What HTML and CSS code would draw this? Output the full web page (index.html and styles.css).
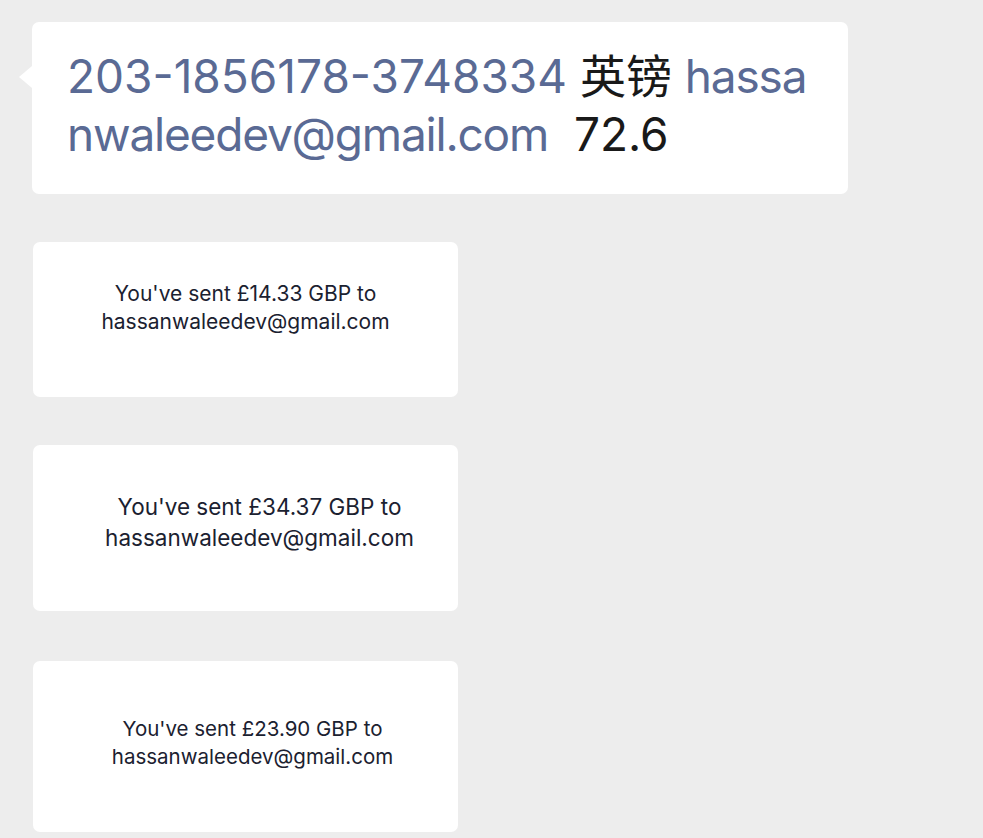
FILE: index.html
```html
<!DOCTYPE html>
<html lang="zh-CN">
<head>
    <meta charset="UTF-8">
    <meta name="viewport" content="width=device-width, initial-scale=1.0">
    <title>Chat</title>
    <link rel="stylesheet" href="styles.css">
</head>
<body>
    <div class="chat">
        <div class="message">
            <div class="bubble">
                <span class="link">203-1856178-3748334</span> 英镑 <span class="link email">hassanwaleedev@gmail.com</span>&nbsp; 72.6
            </div>
        </div>

        <div class="message">
            <div class="receipt receipt-one">
                <p>You've sent £14.33 GBP to<br>hassanwaleedev@gmail.com</p>
            </div>
        </div>

        <div class="message">
            <div class="receipt receipt-two">
                <p>You've sent £34.37 GBP to<br>hassanwaleedev@gmail.com</p>
            </div>
        </div>

        <div class="message">
            <div class="receipt receipt-three">
                <p>You've sent £23.90 GBP to<br>hassanwaleedev@gmail.com</p>
            </div>
        </div>
    </div>
</body>
</html>
```

FILE: styles.css
```css
body, p {
    margin: 0;
    padding: 0;
}

body {
    background-color: #ededed;
    font-family: "Inter", "Noto Sans CJK SC", sans-serif;
    overflow: hidden;
}

.chat {
    display: flex;
    flex-direction: column;
    gap: 48px;
    padding: 22px 0 0 32px;
}

.message {
    display: flex;
}

.bubble {
    position: relative;
    width: 816px;
    box-sizing: border-box;
    padding: 25px 22px 31px 35px;
    background-color: #ffffff;
    border-radius: 7px;
    font-size: 46px;
    line-height: 58px;
    color: #191919;
    word-break: break-all;
}

/* little tail pointing at the sender */
.bubble::before {
    content: "";
    position: absolute;
    left: -13px;
    top: 44px;
    border-top: 11px solid transparent;
    border-bottom: 11px solid transparent;
    border-right: 13px solid #ffffff;
}

.link {
    color: #5a6a94;
}

.email {
    letter-spacing: -1.2px;
}

.receipt {
    width: 425px;
    margin-left: 1px;
    box-sizing: border-box;
    background-color: #ffffff;
    border-radius: 7px;
    color: #1b2130;
    text-align: center;
}

.receipt-one {
    height: 155px;
    padding-top: 38px;
    font-size: 21px;
    line-height: 28px;
}

.receipt-two {
    height: 166px;
    padding: 46px 0 0 28px;
    font-size: 22.5px;
    line-height: 31px;
}

.receipt-three {
    height: 171px;
    margin-top: 2px;
    padding: 54px 0 0 14px;
    font-size: 20.5px;
    line-height: 28px;
}
```
